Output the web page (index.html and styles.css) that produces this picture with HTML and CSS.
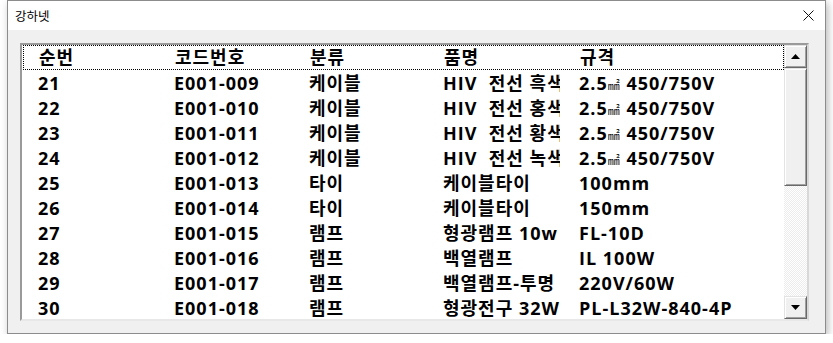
FILE: index.html
```html
<!DOCTYPE html>
<html lang="ko">
<head>
    <meta charset="UTF-8">
    <title>강하넷</title>
    <link rel="stylesheet" href="styles.css">
</head>
<body>

    <!-- Dialog window -->
    <div class="window">
        <div class="title-bar">
            <span class="title">강하넷</span>
            <span class="close">
                <svg width="11" height="11" viewBox="0 0 11 11">
                    <path d="M0.5 0.5 L10.5 10.5 M10.5 0.5 L0.5 10.5" stroke="#111" stroke-width="1" fill="none"/>
                </svg>
            </span>
        </div>

        <div class="window-body">
            <!-- Item list -->
            <div class="listbox">
                <div class="list">
                    <div class="row head">
                        <span>순번</span><span>코드번호</span><span>분류</span><span class="name">품명</span><span>규격</span>
                    </div>
                    <div class="row">
                        <span>21</span><span>E001-009</span><span>케이블</span><span class="name">HIV&nbsp; 전선 흑색</span><span>2.5<span class="unit">㎟</span> 450/750V</span>
                    </div>
                    <div class="row">
                        <span>22</span><span>E001-010</span><span>케이블</span><span class="name">HIV&nbsp; 전선 홍색</span><span>2.5<span class="unit">㎟</span> 450/750V</span>
                    </div>
                    <div class="row">
                        <span>23</span><span>E001-011</span><span>케이블</span><span class="name">HIV&nbsp; 전선 황색</span><span>2.5<span class="unit">㎟</span> 450/750V</span>
                    </div>
                    <div class="row">
                        <span>24</span><span>E001-012</span><span>케이블</span><span class="name">HIV&nbsp; 전선 녹색</span><span>2.5<span class="unit">㎟</span> 450/750V</span>
                    </div>
                    <div class="row">
                        <span>25</span><span>E001-013</span><span>타이</span><span class="name">케이블타이</span><span>100mm</span>
                    </div>
                    <div class="row">
                        <span>26</span><span>E001-014</span><span>타이</span><span class="name">케이블타이</span><span>150mm</span>
                    </div>
                    <div class="row">
                        <span>27</span><span>E001-015</span><span>램프</span><span class="name">형광램프 10w</span><span>FL-10D</span>
                    </div>
                    <div class="row">
                        <span>28</span><span>E001-016</span><span>램프</span><span class="name">백열램프</span><span>IL 100W</span>
                    </div>
                    <div class="row">
                        <span>29</span><span>E001-017</span><span>램프</span><span class="name">백열램프-투명</span><span>220V/60W</span>
                    </div>
                    <div class="row">
                        <span>30</span><span>E001-018</span><span>램프</span><span class="name">형광전구 32W</span><span>PL-L32W-840-4P</span>
                    </div>
                </div>

                <!-- Vertical scroll bar -->
                <div class="scrollbar">
                    <div class="sb-button">
                        <svg width="9" height="5" viewBox="0 0 9 5"><polygon points="4.5,0 9,5 0,5" fill="#000"/></svg>
                    </div>
                    <div class="sb-track">
                        <div class="sb-thumb"></div>
                    </div>
                    <div class="sb-button">
                        <svg width="9" height="5" viewBox="0 0 9 5"><polygon points="0,0 9,0 4.5,5" fill="#000"/></svg>
                    </div>
                </div>
            </div>
        </div>
    </div>

</body>
</html>
```

FILE: styles.css
```css
body {
    margin: 0;
    padding: 0;
    background-color: #ffffff;
    font-family: "Noto Sans CJK KR", sans-serif;
}

/* Window frame */
.window {
    width: 819px;
    height: 334px;
    margin-left: 7px;
    box-sizing: border-box;
    border: 1px solid #8c8c8c;
    background-color: #f0f0f0;
    box-shadow: 2px 3px 8px rgba(0, 0, 0, 0.28);
    display: flex;
    flex-direction: column;
}

.title-bar {
    height: 29px;
    background-color: #ffffff;
    display: flex;
    align-items: center;
    justify-content: space-between;
    padding: 0 11px 0 7px;
}

    .title-bar .title {
        font-size: 12.5px;
        color: #000;
    }

    .title-bar .close {
        display: flex;
    }

.window-body {
    flex: 1;
    padding: 13px 0 0 12px;
}

/* List box */
.listbox {
    width: 789px;
    height: 278px;
    box-sizing: border-box;
    border-style: solid;
    border-width: 2px;
    border-color: #9a9a9a #d8d8d8 #e8e8e8 #9a9a9a;
    background-color: #ffffff;
    display: flex;
}

.list {
    flex: 1;
    overflow: hidden;
    font-family: "Open Sans", "Noto Sans CJK KR", sans-serif;
    font-weight: bold;
    font-size: 18px;
    letter-spacing: 1px;
    color: #000;
}

    .list .row {
        height: 25px;
        line-height: 26px;
        display: grid;
        grid-template-columns: 136px 135px 134px 136px 1fr;
        padding-left: 16px;
        white-space: nowrap;
    }

        .list .row span {
            overflow: hidden;
        }

        .list .row .name {
            max-width: 117px;
        }

        .list .row .unit {
            font-size: 12px;
            font-weight: normal;
            letter-spacing: 0;
            margin-right: 1px;
            overflow: visible;
        }

    .list .head {
        box-sizing: border-box;
        border: 1px dotted #000;
        margin-left: 1px;
        padding-left: 15px;
        line-height: 23px;
    }

/* Scroll bar */
.scrollbar {
    width: 23px;
    display: flex;
    flex-direction: column;
}

.sb-button,
.sb-thumb {
    box-sizing: border-box;
    background-color: #f0f0f0;
    border-style: solid;
    border-width: 1px;
    border-color: #e3e3e3 #696969 #696969 #e3e3e3;
    box-shadow: inset 1px 1px #ffffff, inset -1px -1px #a0a0a0;
}

.sb-button {
    height: 23px;
    display: flex;
    align-items: center;
    justify-content: center;
}

.sb-track {
    flex: 1;
    background-color: #ffffff;
    background-image: repeating-conic-gradient(#ececec 0 25%, #ffffff 0 50%);
    background-size: 2px 2px;
}

.sb-thumb {
    height: 118px;
}
```
